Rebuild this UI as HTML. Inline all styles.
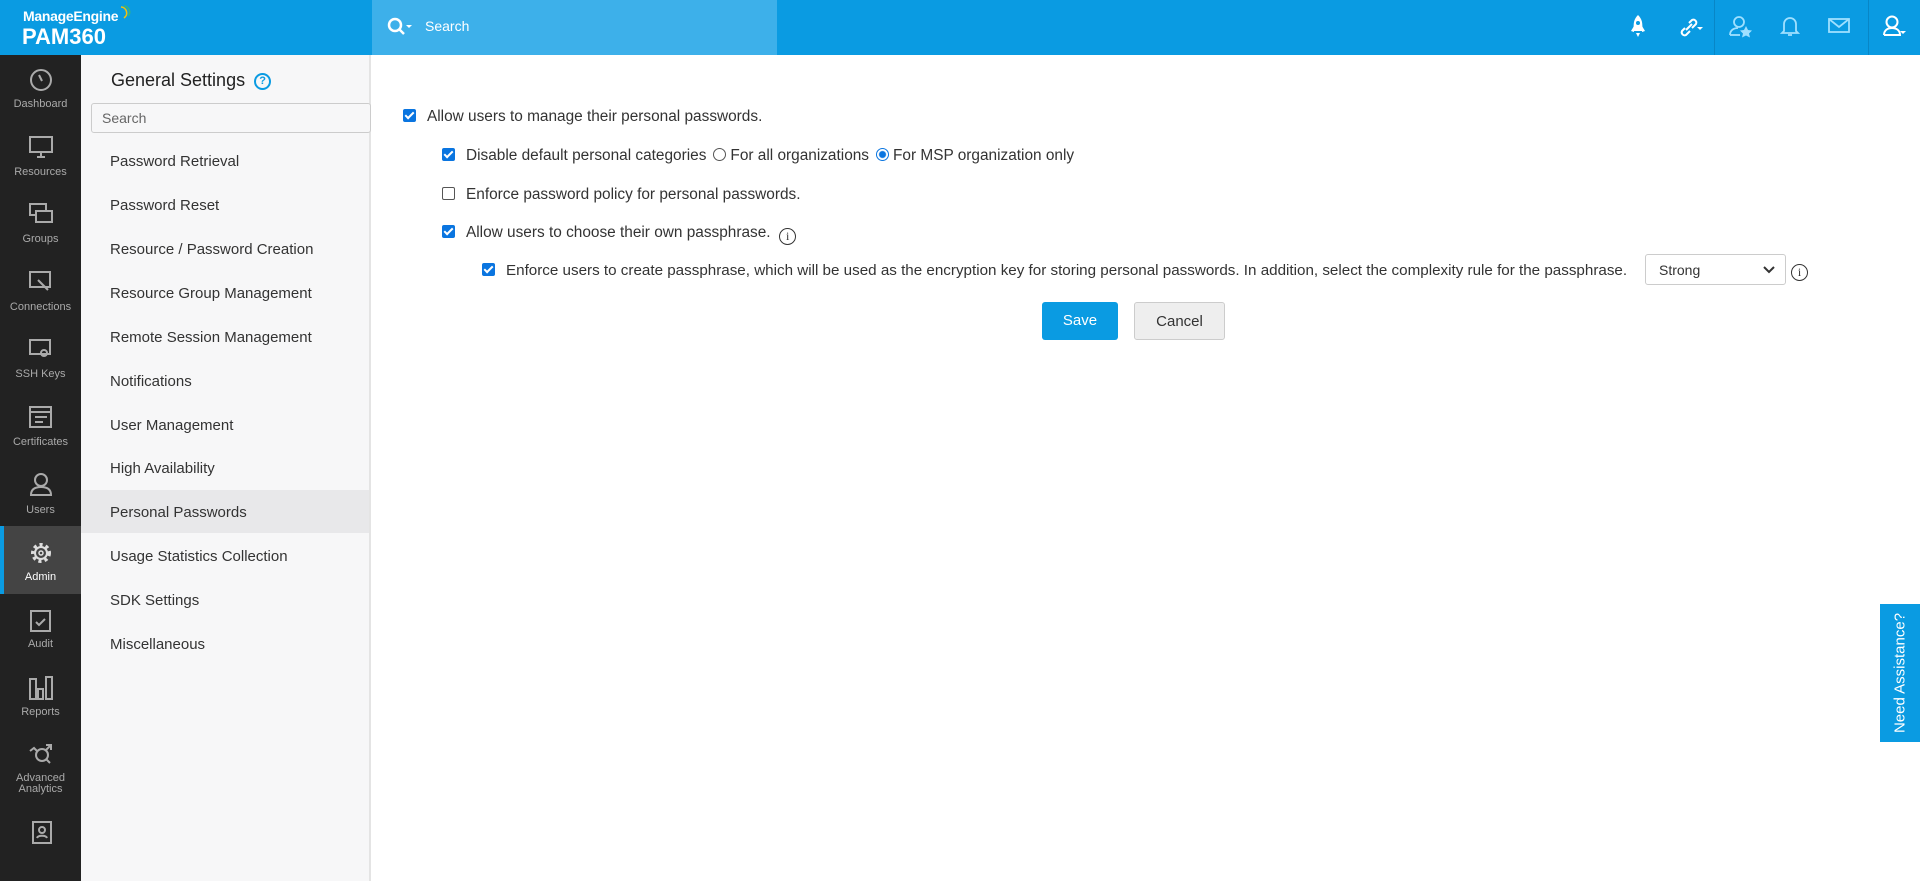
<!DOCTYPE html>
<html><head><meta charset="utf-8"><style>
*{box-sizing:border-box;margin:0;padding:0}
body{width:1920px;height:881px;overflow:hidden;font-family:"Liberation Sans",sans-serif;background:#fff;position:relative;color:#333}
.top{position:absolute;left:0;top:0;width:1920px;height:55px;background:#0a9be2}
.logo1{position:absolute;left:23px;top:8px;color:#fff;font-size:14px;font-weight:bold;letter-spacing:-0.3px}
.logo2{position:absolute;left:22px;top:24px;color:#fff;font-size:22px;font-weight:bold}
.srch{position:absolute;left:372px;top:0;width:405px;height:55px;background:#3db0ea}
.srch span{position:absolute;left:53px;top:18px;color:#fff;font-size:14px}
.tico{position:absolute;top:14px}
.sep{position:absolute;top:0;width:1px;height:55px;background:#0886c6}
.nav{position:absolute;left:0;top:55px;width:81px;height:826px;background:#222}
.ni{position:absolute;left:0;width:81px;text-align:center;color:#aaa;font-size:11px}
.act{position:absolute;left:0;top:471px;width:81px;height:68px;background:#444;border-left:4px solid #0a9be2}
.side{position:absolute;left:81px;top:55px;width:290px;height:826px;background:#f7f7f8;border-right:2px solid #e4e4e4}
.side h1{position:absolute;left:30px;top:15px;font-size:18px;font-weight:normal;color:#222}
.sin{position:absolute;left:10px;top:48px;width:280px;height:30px;border:1px solid #ccc;border-radius:3px;background:#f7f7f8;color:#666;font-size:14px;padding:6px 10px}
.mi{position:absolute;left:29px;font-size:15px;color:#333}
.hl{position:absolute;left:0;top:435px;width:288px;height:43px;background:#e8e8ea}
.row{position:absolute;font-size:15.4px;color:#333;white-space:nowrap}
.cb{display:inline-block;width:13px;height:13px;border-radius:2px;background:#0a75e0;vertical-align:-1px;position:relative;margin-right:11px}
.cb:after{content:"";position:absolute;left:4px;top:1px;width:3px;height:7px;border:solid #fff;border-width:0 2px 2px 0;transform:rotate(45deg)}
.cbe{display:inline-block;width:13px;height:13px;border-radius:2px;border:1px solid #555;vertical-align:-1px;margin-right:11px}
.rd{display:inline-block;width:13px;height:13px;border-radius:50%;border:1px solid #555;vertical-align:-1px;margin:0 4px 0 7px}
.rds{border:1px solid #0a75e0;background:radial-gradient(#0a75e0 3px,#fff 4px)}
.info{display:inline-block;width:17px;height:17px;border:1.3px solid #333;border-radius:50%;font-family:"Liberation Serif",serif;font-size:12px;text-align:center;line-height:15px;vertical-align:-3px}
.btn{position:absolute;top:302px;height:38px;border-radius:3px;font-size:15px;text-align:center;line-height:38px}
</style></head><body>
<div class="top">
<div class="logo1">ManageEngine</div>
<svg style="position:absolute;left:118px;top:5px" width="14" height="14"><path d="M3 2 A6 6 0 0 1 6 13" stroke="#f4c20d" stroke-width="1.6" fill="none"/><path d="M6 1 A6 6 0 0 1 10 11" stroke="#36b37e" stroke-width="1.6" fill="none"/></svg>
<div class="logo2">PAM360</div>
<div class="srch"><svg style="position:absolute;left:14px;top:16px" width="28" height="22"><circle cx="9" cy="9" r="6" stroke="#fff" stroke-width="2.5" fill="none"/><path d="M13 13l5 5" stroke="#fff" stroke-width="2.5"/><path d="M20 9l3 3 3-3z" fill="#fff"/></svg><span>Search</span></div>
<svg class="tico" style="left:1629px" width="18" height="26"><path d="M9 1C5 5 4 9 5 17h8c1-8 0-12-4-16z" fill="#fff"/><path d="M5 12l-3 5 3 1M13 12l3 5-3 1" fill="#fff"/><circle cx="9" cy="9" r="2" fill="#0a9be2"/><path d="M7 19h4l-2 4z" fill="#fff"/></svg>
<svg class="tico" style="left:1676px" width="28" height="26"><path d="M9 14l-3 3a3 3 0 0 0 4 4l4-4M13 9l3-3a3 3 0 0 1 4 4l-4 4M10 16l6-6" stroke="#fff" stroke-width="2" fill="none"/><path d="M21 13l3 3 3-3z" fill="#fff"/></svg>
<div class="sep" style="left:1714px"></div>
<svg class="tico" style="left:1728px" width="26" height="26"><circle cx="11" cy="8" r="5" stroke="#9fe0ff" stroke-width="1.8" fill="none"/><path d="M2 21c0-5 4-7 8-7" stroke="#9fe0ff" stroke-width="1.8" fill="none"/><path d="M2 21h10" stroke="#9fe0ff" stroke-width="1.8"/><path d="M18 12l2 4 4 .5-3 3 1 4-4-2-4 2 1-4-3-3 4-.5z" fill="#9fe0ff"/></svg>
<svg class="tico" style="left:1780px" width="20" height="26"><path d="M4 17V10a6 6 0 0 1 12 0v7l2 2H2z M8 21h4" stroke="#9fe0ff" stroke-width="1.8" fill="none"/></svg>
<svg class="tico" style="left:1828px;top:17px" width="22" height="18"><rect x="1" y="2" width="20" height="13" stroke="#9fe0ff" stroke-width="1.8" fill="none"/><path d="M1 2l10 8 10-8" stroke="#9fe0ff" stroke-width="1.8" fill="none"/></svg>
<div class="sep" style="left:1868px"></div>
<svg class="tico" style="left:1882px" width="26" height="26"><circle cx="10" cy="8" r="5.5" stroke="#fff" stroke-width="2" fill="none"/><path d="M2 21c0-5 4-7 8-7s8 2 8 7H2" stroke="#fff" stroke-width="2" fill="none"/><path d="M18 17l3 3 3-3z" fill="#fff"/></svg>
</div>

<div class="nav">
<div class="act"></div>
<svg class="ni" style="top:12px;left:28px;width:26px" height="24"><circle cx="13" cy="13" r="10" stroke="#aaa" stroke-width="2" fill="none"/><path d="M11 8l3 6" stroke="#aaa" stroke-width="2"/></svg><div class="ni" style="top:43px">Dashboard</div>
<svg class="ni" style="top:80px;left:28px;width:26px" height="24"><rect x="2" y="2" width="22" height="15" stroke="#aaa" stroke-width="2" fill="none"/><path d="M9 22h8M13 17v5" stroke="#aaa" stroke-width="2"/></svg><div class="ni" style="top:111px">Resources</div>
<svg class="ni" style="top:147px;left:28px;width:26px" height="24"><rect x="2" y="2" width="16" height="11" stroke="#aaa" stroke-width="2" fill="none"/><rect x="8" y="9" width="16" height="11" stroke="#aaa" stroke-width="2" fill="#222"/></svg><div class="ni" style="top:178px">Groups</div>
<svg class="ni" style="top:215px;left:28px;width:26px" height="24"><rect x="2" y="2" width="20" height="15" stroke="#aaa" stroke-width="2" fill="none"/><path d="M10 10l10 10" stroke="#aaa" stroke-width="2"/></svg><div class="ni" style="top:246px">Connections</div>
<svg class="ni" style="top:283px;left:28px;width:26px" height="24"><rect x="2" y="2" width="20" height="14" stroke="#aaa" stroke-width="2" fill="none"/><circle cx="16" cy="15" r="3" stroke="#aaa" stroke-width="2" fill="none"/></svg><div class="ni" style="top:313px">SSH Keys</div>
<svg class="ni" style="top:350px;left:28px;width:26px" height="24"><rect x="2" y="2" width="21" height="20" stroke="#aaa" stroke-width="2" fill="none"/><path d="M2 7h21M7 12h12M7 17h8" stroke="#aaa" stroke-width="2"/></svg><div class="ni" style="top:381px">Certificates</div>
<svg class="ni" style="top:417px;left:28px;width:26px" height="24"><circle cx="13" cy="8" r="6" stroke="#aaa" stroke-width="2" fill="none"/><path d="M3 23c0-6 4-8 10-8s10 2 10 8z" stroke="#aaa" stroke-width="2" fill="none"/></svg><div class="ni" style="top:449px">Users</div>
<svg class="ni" style="top:485px;left:27px;width:28px" height="26"><circle cx="14" cy="13" r="8" stroke="#ddd" stroke-width="4" stroke-dasharray="3 3" fill="none"/><circle cx="14" cy="13" r="6" stroke="#ddd" stroke-width="2" fill="none"/><circle cx="14" cy="13" r="2" stroke="#ddd" stroke-width="1.5" fill="none"/></svg><div class="ni" style="top:516px;color:#fff">Admin</div>
<svg class="ni" style="top:552px;left:28px;width:26px" height="26"><rect x="3" y="4" width="19" height="20" stroke="#aaa" stroke-width="2" fill="none"/><path d="M8 15l3 3 6-6" stroke="#aaa" stroke-width="2" fill="none"/></svg><div class="ni" style="top:583px">Audit</div>
<svg class="ni" style="top:620px;left:28px;width:26px" height="26"><rect x="2" y="4" width="6" height="20" stroke="#aaa" stroke-width="2" fill="none"/><rect x="10" y="14" width="5" height="10" stroke="#aaa" stroke-width="2" fill="none"/><rect x="18" y="2" width="6" height="22" stroke="#aaa" stroke-width="2" fill="none"/></svg><div class="ni" style="top:651px">Reports</div>
<svg class="ni" style="top:686px;left:28px;width:28px" height="26"><circle cx="14" cy="14" r="6" stroke="#aaa" stroke-width="2" fill="none"/><path d="M2 10l4-3 4 4M18 4h5v5M22 5l-5 5M18 18l4 4" stroke="#aaa" stroke-width="2" fill="none"/></svg><div class="ni" style="top:718px;line-height:11px">Advanced<br>Analytics</div>
<svg class="ni" style="top:765px;left:28px;width:26px" height="26"><rect x="5" y="2" width="18" height="21" stroke="#aaa" stroke-width="2" fill="none"/><circle cx="14" cy="10" r="3" stroke="#aaa" stroke-width="2" fill="none"/><path d="M9 18c1-3 9-3 10 0" stroke="#aaa" stroke-width="2" fill="none"/></svg>
</div>

<div class="side">
<h1>General Settings <span style="display:inline-block;width:17px;height:17px;border:2px solid #0a9be2;border-radius:50%;color:#0a9be2;font-size:11px;text-align:center;line-height:13px;font-weight:bold;vertical-align:2px;margin-left:4px">?</span></h1>
<div class="sin">Search</div>
<div class="hl"></div>
<div class="mi" style="top:98px">Password Retrieval</div>
<div class="mi" style="top:142px">Password Reset</div>
<div class="mi" style="top:186px">Resource / Password Creation</div>
<div class="mi" style="top:230px">Resource Group Management</div>
<div class="mi" style="top:274px">Remote Session Management</div>
<div class="mi" style="top:318px">Notifications</div>
<div class="mi" style="top:362px">User Management</div>
<div class="mi" style="top:405px">High Availability</div>
<div class="mi" style="top:449px">Personal Passwords</div>
<div class="mi" style="top:493px">Usage Statistics Collection</div>
<div class="mi" style="top:537px">SDK Settings</div>
<div class="mi" style="top:581px">Miscellaneous</div>
</div>

<div class="row" style="left:403px;top:108px"><span class="cb"></span>Allow users to manage their personal passwords.</div>
<div class="row" style="left:442px;top:147px"><span class="cb"></span>Disable default personal categories<span class="rd"></span>For all organizations<span class="rd rds"></span>For MSP organization only</div>
<div class="row" style="left:442px;top:186px"><span class="cbe"></span>Enforce password policy for personal passwords.</div>
<div class="row" style="left:442px;top:224px"><span class="cb"></span>Allow users to choose their own passphrase. &nbsp;<span class="info">i</span></div>
<div class="row" style="left:482px;top:262px;font-size:15.2px"><span class="cb"></span>Enforce users to create passphrase, which will be used as the encryption key for storing personal passwords. In addition, select the complexity rule for the passphrase.</div>
<div style="position:absolute;left:1645px;top:254px;width:141px;height:31px;border:1px solid #ccc;border-radius:3px;font-size:14px;padding:7px 13px">Strong<svg style="position:absolute;right:10px;top:11px" width="12" height="8"><path d="M1 1l5 5 5-5" stroke="#333" stroke-width="2" fill="none"/></svg></div>
<span class="info" style="position:absolute;left:1791px;top:264px">i</span>
<div class="btn" style="left:1042px;width:76px;background:#0a9be2;color:#fff">Save</div>
<div class="btn" style="left:1134px;width:91px;background:#eee;border:1px solid #ccc;color:#333">Cancel</div>
<div style="position:absolute;left:1880px;top:604px;width:40px;height:138px;background:#0a9be2"><div style="position:absolute;left:20px;top:69px;transform:translate(-50%,-50%) rotate(-90deg);color:#fff;font-size:15px;white-space:nowrap">Need Assistance?</div></div>
</body></html>
